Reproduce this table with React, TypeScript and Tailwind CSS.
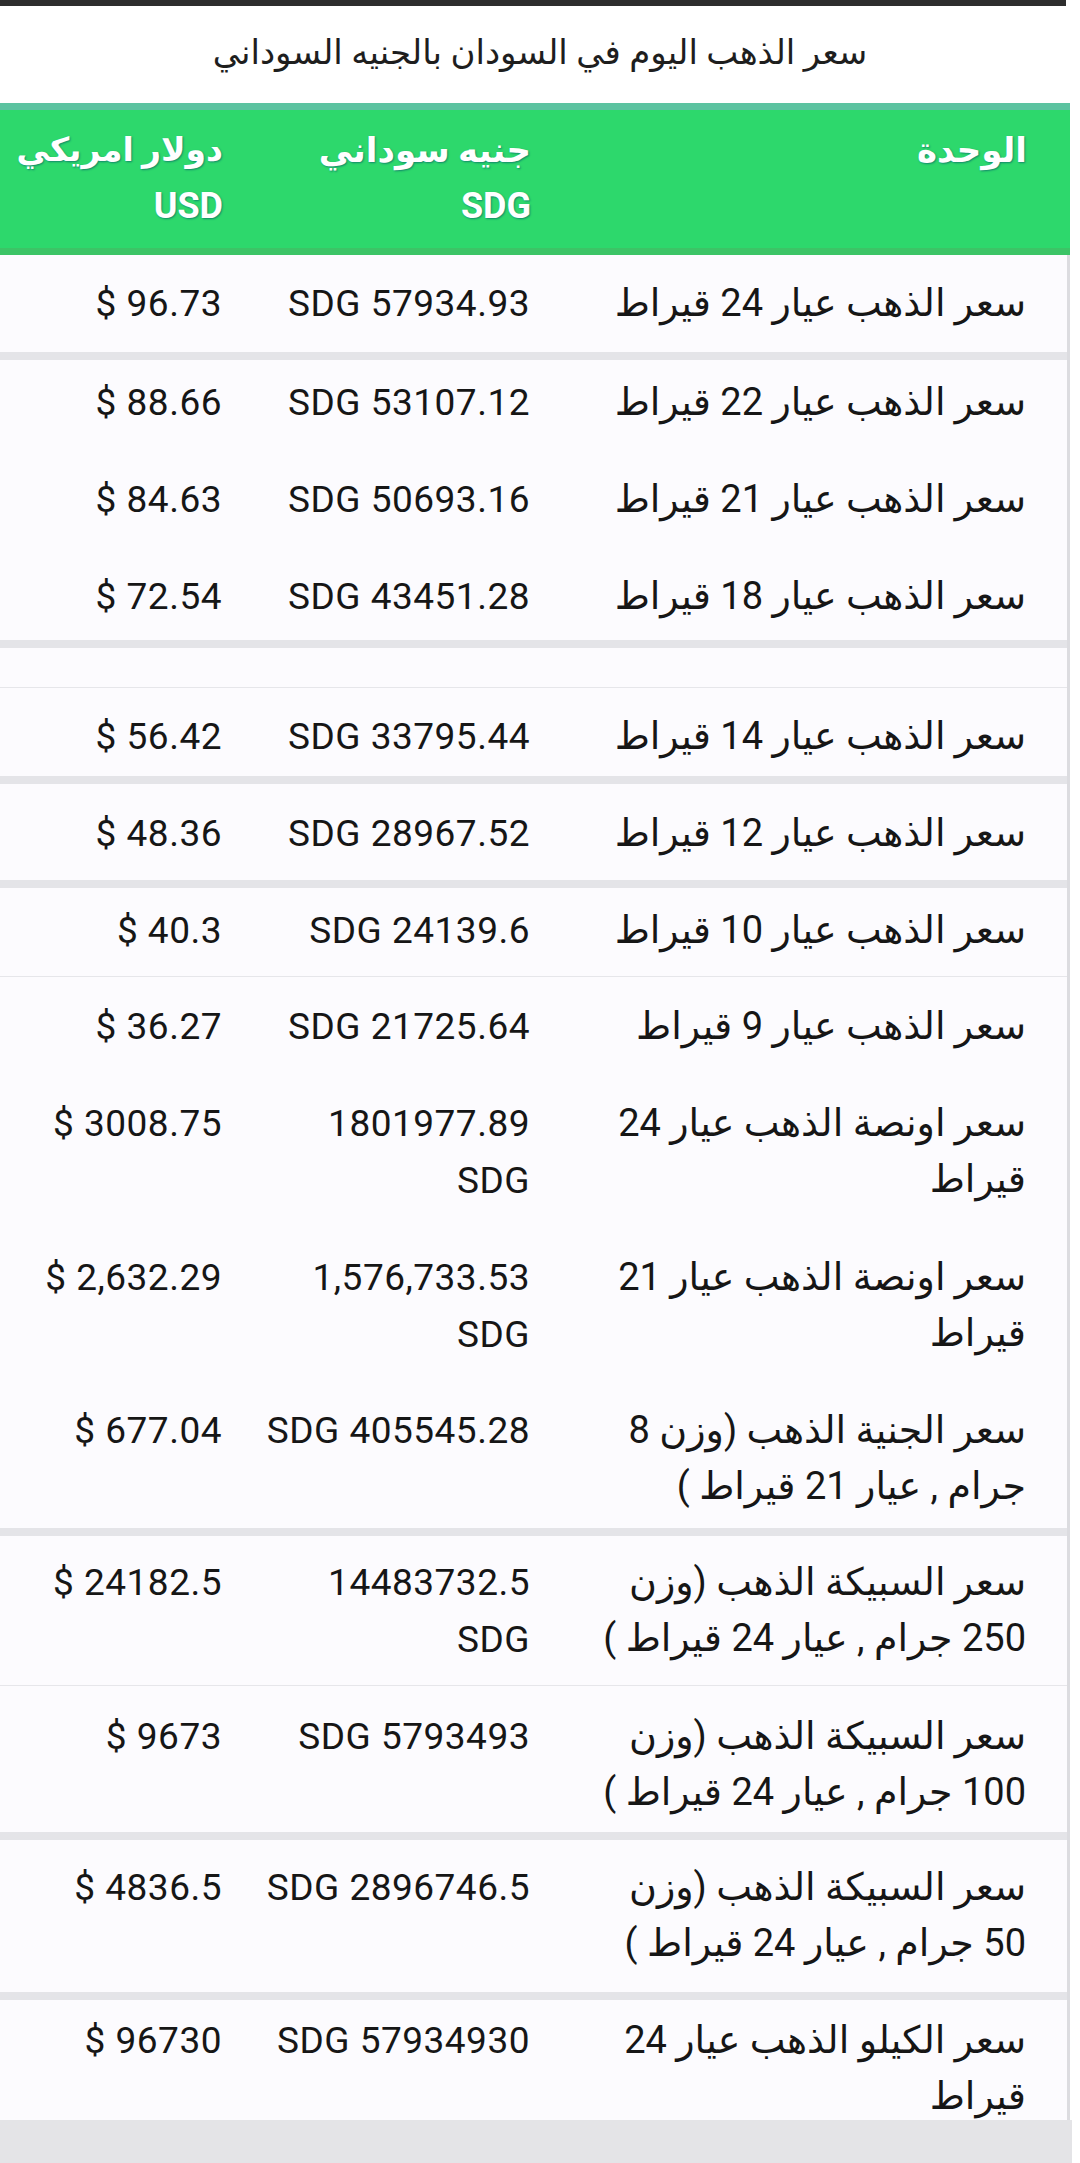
import React from "react";

type RowItem =
  | { kind: "row"; h: number; pt: number; unit: string[]; sdg: string[]; usd: string }
  | { kind: "sep" }
  | { kind: "line" }
  | { kind: "empty"; h: number };

const items: RowItem[] = [
  { kind: "row", h: 97, pt: 20, unit: ["سعر الذهب عيار 24 قيراط"], sdg: ["SDG 57934.93"], usd: "$ 96.73" },
  { kind: "sep" },
  { kind: "row", h: 91, pt: 14, unit: ["سعر الذهب عيار 22 قيراط"], sdg: ["SDG 53107.12"], usd: "$ 88.66" },
  { kind: "row", h: 97, pt: 20, unit: ["سعر الذهب عيار 21 قيراط"], sdg: ["SDG 50693.16"], usd: "$ 84.63" },
  { kind: "row", h: 92, pt: 20, unit: ["سعر الذهب عيار 18 قيراط"], sdg: ["SDG 43451.28"], usd: "$ 72.54" },
  { kind: "sep" },
  { kind: "empty", h: 39 },
  { kind: "line" },
  { kind: "row", h: 88, pt: 20, unit: ["سعر الذهب عيار 14 قيراط"], sdg: ["SDG 33795.44"], usd: "$ 56.42" },
  { kind: "sep" },
  { kind: "row", h: 96, pt: 21, unit: ["سعر الذهب عيار 12 قيراط"], sdg: ["SDG 28967.52"], usd: "$ 48.36" },
  { kind: "sep" },
  { kind: "row", h: 88, pt: 14, unit: ["سعر الذهب عيار 10 قيراط"], sdg: ["SDG 24139.6"], usd: "$ 40.3" },
  { kind: "line" },
  { kind: "row", h: 97, pt: 21, unit: ["سعر الذهب عيار 9 قيراط"], sdg: ["SDG 21725.64"], usd: "$ 36.27" },
  { kind: "row", h: 154, pt: 21, unit: ["سعر اونصة الذهب عيار 24", "قيراط"], sdg: ["1801977.89", "SDG"], usd: "$ 3008.75" },
  { kind: "row", h: 152, pt: 21, unit: ["سعر اونصة الذهب عيار 21", "قيراط"], sdg: ["1,576,733.53", "SDG"], usd: "$ 2,632.29" },
  { kind: "row", h: 148, pt: 22, unit: ["سعر الجنية الذهب (وزن 8", "جرام , عيار 21 قيراط )"], sdg: ["SDG 405545.28"], usd: "$ 677.04" },
  { kind: "sep" },
  { kind: "row", h: 149, pt: 18, unit: ["سعر السبيكة الذهب (وزن", "250 جرام , عيار 24 قيراط )"], sdg: ["14483732.5", "SDG"], usd: "$ 24182.5" },
  { kind: "line" },
  { kind: "row", h: 146, pt: 22, unit: ["سعر السبيكة الذهب (وزن", "100 جرام , عيار 24 قيراط )"], sdg: ["SDG 5793493"], usd: "$ 9673" },
  { kind: "sep" },
  { kind: "row", h: 152, pt: 19, unit: ["سعر السبيكة الذهب (وزن", "50 جرام , عيار 24 قيراط )"], sdg: ["SDG 2896746.5"], usd: "$ 4836.5" },
  { kind: "sep" },
  { kind: "row", h: 120, pt: 12, unit: ["سعر الكيلو الذهب عيار 24", "قيراط"], sdg: ["SDG 57934930"], usd: "$ 96730" },
];

function Ltr({ text }: { text: string }) {
  return (
    <div className="whitespace-nowrap">
      <span dir="ltr" className="text-[37px] tracking-[0.5px]">
        {text}
      </span>
    </div>
  );
}

export default function App() {
  return (
    <div className="w-[1080px] min-h-[2163px] bg-white font-['Roboto','DejaVu_Sans',sans-serif] text-[#161616]">
      <div className="h-[6px] w-[1066px] bg-[#2d2d2d]" />
      <div className="h-[97px] pt-[21px] text-center">
        <h1 dir="rtl" className="text-[34px] leading-[50px] font-normal text-[#1e1e1e]">
          سعر الذهب اليوم في السودان بالجنيه السوداني
        </h1>
      </div>

      <div dir="rtl" className="w-[1070px]">
        <div className="flex h-[152px] gap-[30px] border-t-[7px] border-b-[7px] border-t-[#5cc3a0] border-b-[#3cc466] bg-[#2dd86c] pr-[43px] pt-[12px] text-[36px] font-bold leading-[56px] text-white [text-shadow:1px_1px_2px_#12876a]">
          <div className="w-[466px] text-[34px]">الوحدة</div>
          <div className="w-[278px]">
            <div className="whitespace-nowrap text-[34px]">جنيه سوداني</div>
            <div>SDG</div>
          </div>
          <div className="flex-1">
            <div className="whitespace-nowrap text-[33px]">دولار امريكي</div>
            <div>USD</div>
          </div>
        </div>

        <div className="border-r-[3px] border-r-[#dcdce0] bg-[#fcfbfe] text-[38px] leading-[56px]">
          {items.map((it, i) => {
            if (it.kind === "sep") return <div key={i} className="h-[8px] bg-[#e4e4e8]" />;
            if (it.kind === "line") return <div key={i} className="h-px bg-[#e6e6ea]" />;
            if (it.kind === "empty") return <div key={i} style={{ height: it.h }} />;
            return (
              <div key={i} className="flex gap-[30px] pr-[41px]" style={{ height: it.h, paddingTop: it.pt }}>
                <div className="w-[466px]">
                  {it.unit.map((u, j) => (
                    <div key={j} className="whitespace-nowrap">
                      {u}
                    </div>
                  ))}
                </div>
                <div className="w-[278px]">
                  {it.sdg.map((s, j) => (
                    <Ltr key={j} text={s} />
                  ))}
                </div>
                <div className="flex-1">
                  <Ltr text={it.usd} />
                </div>
              </div>
            );
          })}
        </div>
      </div>
      <div className="h-[43px] w-[1072px] bg-[#e4e4e7]" />
    </div>
  );
}
